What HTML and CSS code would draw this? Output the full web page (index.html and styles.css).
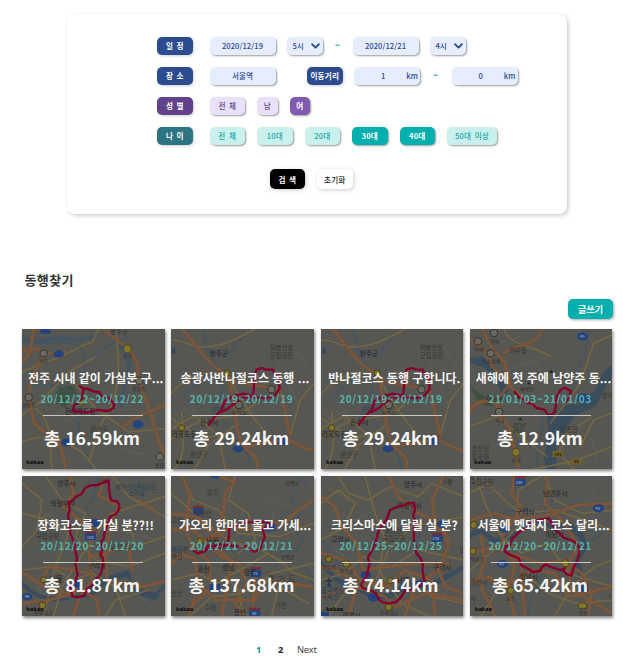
FILE: index.html
```html
<!DOCTYPE html>
<html lang="ko">
<head>
<meta charset="utf-8">
<title>동행찾기</title>
<link rel="stylesheet" href="styles.css">
</head>
<body>
<svg class="defs" width="0" height="0">
  <defs>
    <g id="wanju">
      <path class="water" d="M18 48 C50 70 90 62 118 80 C160 105 192 108 206 78 C220 50 245 38 258 20 M50 225 C80 200 110 170 165 150 M115 21 C120 60 125 85 165 150 C180 195 170 250 130 290 M165 280 C190 330 245 350 258 440"/>
      <path class="water wide" d="M18 75 L32 90"/>
      <path class="minor" d="M18 55 C55 50 80 80 120 75 C175 70 200 60 270 20 M18 215 C55 175 110 140 175 155 C215 190 225 245 300 330 M18 350 C55 325 80 300 150 290 C200 285 240 275 270 245 M30 440 C65 400 55 330 50 270 M20 290 L110 350 L200 330 M20 320 L90 280 L160 340 L180 440 M445 185 L405 235 L375 340 M90 440 L130 370 L210 310"/>
      <path class="local" d="M25 265 L80 330 M45 250 L115 310 M65 240 L125 305 M20 310 L90 265 M30 340 L110 285 M60 350 L130 320 M375 60 L430 140 M340 120 L400 250"/>
      <path class="major" d="M52 21 C100 75 120 120 180 155 C225 200 300 185 345 205 L375 340 C325 370 265 365 220 375 M180 155 C215 205 205 330 235 375 C270 400 280 410 275 440 M340 355 C380 345 400 380 445 385"/>
      <circle class="junction" cx="221" cy="249" r="11"/><circle class="junction" cx="319" cy="202" r="11"/>
      <circle class="town" cx="186" cy="153" r="9"/><circle class="town" cx="50" cy="317" r="9"/>
      <ellipse class="shield" cx="219" cy="380" rx="16" ry="11"/><rect class="shield" x="339" y="342" width="32" height="27" rx="6"/><rect class="shield-top" x="339" y="340" width="32" height="7"/>
      <text class="place" x="134" y="102">완주군</text><text class="area" x="314" y="85">위봉산성</text><text class="area" x="314" y="108">군립공원</text>
      <text class="place" x="105" y="308">전주시</text><text class="place" x="21" y="346">라북도청</text><text class="area" x="76" y="404">완산구</text><text class="small" x="201" y="278">동전주</text><text class="small blue" x="140" y="266">전주역</text><text class="small" x="18" y="92">읍</text>
      <path class="route" d="M132 308 L148 285 L168 266 L180 237 L205 222 L235 215 L264 221 L269 165 L274 143 L290 138 L302 143 L324 143 L326 153 L342 165 L343 202 L329 220 L302 229 L272 226 L248 225 L222 232 L205 246 L190 259 L168 271"/>
    </g>
  </defs>
</svg>
<main class="page">
  <form class="search">
    <div class="row">
      <span class="label navy">일 정</span>
      <span class="field input">2020/12/19</span>
      <span class="field select">5시 <svg class="arrow" viewBox="0 0 8 6"><path d="M1 1l3 3 3-3"/></svg></span>
      <span class="tilde">~</span>
      <span class="field input">2020/12/21</span>
      <span class="field select">4시 <svg class="arrow" viewBox="0 0 8 6"><path d="M1 1l3 3 3-3"/></svg></span>
    </div>
    <div class="row">
      <span class="label navy">장 소</span>
      <span class="field input place-input">서울역</span>
      <span class="label navy distance">이동거리</span>
      <span class="field input km"><span>1</span><span>km</span></span>
      <span class="tilde">~</span>
      <span class="field input km"><span>0</span><span>km</span></span>
    </div>
    <div class="row">
      <span class="label purple">성 별</span>
      <span class="field chip lilac">전 체</span>
      <span class="field chip lilac short">남</span>
      <span class="field chip lilac short on">여</span>
    </div>
    <div class="row">
      <span class="label teal">나 이</span>
      <span class="field chip mint">전 체</span>
      <span class="field chip mint">10대</span>
      <span class="field chip mint">20대</span>
      <span class="field chip mint on">30대</span>
      <span class="field chip mint on">40대</span>
      <span class="field chip mint long">50대 이상</span>
    </div>
    <div class="actions"><span class="button black">검 색</span><span class="button">초기화</span></div>
  </form>

  <h1 class="title">동행찾기</h1>
  <div class="toolbar"><span class="write">글쓰기</span></div>

  <section class="cards">
    <article class="card">
      <svg class="map" viewBox="20 21 427 420" preserveAspectRatio="none">
        <path class="green" d="M135 195 L170 192 L185 215 L160 235 L150 260 L125 250 L115 225Z"/>
        <path class="water wide" d="M20 52 C80 70 120 35 180 55 L240 45 M290 21 C300 70 325 75 340 120 C345 160 320 200 315 250"/>
        <path class="water" d="M20 55 C60 80 120 50 170 65 C215 70 215 140 195 165 M20 185 C60 190 100 180 150 200 C190 225 185 300 195 350 C205 390 230 420 225 440 M230 110 C265 70 300 65 345 40"/>
        <path class="minor" d="M20 150 L90 120 C150 105 190 70 230 60 L250 21 M20 280 L85 230 L160 150 L240 105 M110 440 C100 390 120 300 60 260 M20 360 C90 330 130 350 200 390 L240 440 M175 180 L240 260 L340 330 L447 320 M300 21 C310 100 325 210 260 300 L220 420"/>
        <path class="local" d="M100 220 L210 310 M110 280 L250 230 M130 310 L240 250 M320 380 L390 400 M340 270 L350 330 M85 170 L150 280"/>
        <path class="major" d="M265 21 C310 65 355 75 365 130 C370 200 390 230 405 270 L420 330 L447 400 M55 21 L45 90 L20 120 M85 95 L150 90 M20 90 C55 75 75 80 85 95 C75 130 45 150 40 220 L55 300 C90 350 140 330 150 440 M320 315 L365 285 L447 250"/>
        <circle class="junction" cx="85" cy="94" r="11"/><circle class="junction" cx="40" cy="226" r="11"/><circle class="junction" cx="372" cy="176" r="11"/><circle class="junction" cx="433" cy="404" r="11"/><circle class="town" cx="336" cy="80" r="12"/><circle class="town" cx="198" cy="241" r="9"/>
        <ellipse class="shield" cx="130" cy="96" rx="16" ry="11"/><rect class="shield" x="74" y="21" width="32" height="14" rx="6"/><ellipse class="shield" cx="368" cy="307" rx="16" ry="12"/><ellipse class="shield" cx="154" cy="361" rx="16" ry="12"/>
        <text class="small" x="71" y="123">전주</text><text class="small" x="323" y="109">전주</text><text class="small" x="350" y="206">동전주</text><text class="small" x="20" y="256">서전주</text><text class="small" x="418" y="435">상관</text><text class="place" x="148" y="275">전라북도청</text><text class="area" x="224" y="331">완산구</text><text class="area" x="285" y="36">완주군</text>
        <path class="route" d="M193 192 L207 201 L215 200 L234 208 L250 210 L258 221 L280 228 L296 245 L294 258 L278 267 L244 264 L220 271 L172 267 L176 250 L190 240 L202 225 L203 202"/>
        <text class="kakao" x="33" y="426">kakao</text>
      </svg>
      <h2>전주 시내 같이 가실분 구...</h2><p class="date">20/12/22~20/12/22</p><p class="total">총 16.59km</p>
    </article>
    <article class="card">
      <svg class="map" viewBox="18 21 427 420" preserveAspectRatio="none"><use href="#wanju"/><text class="kakao" x="33" y="426">kakao</text></svg>
      <h2>송광사반나절코스 동행 ...</h2><p class="date">20/12/19~20/12/19</p><p class="total">총 29.24km</p>
    </article>
    <article class="card">
      <svg class="map" viewBox="18 21 427 420" preserveAspectRatio="none"><use href="#wanju"/><text class="kakao" x="33" y="426">kakao</text></svg>
      <h2>반나절코스 동행 구합니다.</h2><p class="date">20/12/19~20/12/19</p><p class="total">총 29.24km</p>
    </article>
    <article class="card">
      <svg class="map" viewBox="19 118 427 420" preserveAspectRatio="none">
        <path class="green" d="M19 290 L70 325 L90 350 L50 345Z"/>
        <path class="river" d="M19 205 L55 200 L110 255 L135 300 L115 335 L105 290 L65 235 L19 220Z"/>
        <path class="river" d="M446 225 L420 245 L395 300 L345 342 L305 345 L265 370 L250 380 L255 445 L240 500 L245 538 L275 538 L280 490 L275 450 L305 420 L330 380 L395 350 L425 290 L446 265Z"/>
        <path class="water" d="M375 118 L365 190 L340 250 L320 330 M220 538 C215 480 235 430 240 390"/>
        <path class="minor" d="M120 118 C140 170 200 165 260 200 M446 135 L390 160 L350 280 L310 335 L260 400 M19 410 L100 380 L170 440 L250 500 M380 385 L310 430 L285 490 L330 538 M446 370 L390 390 L350 470 M446 470 L330 515 L210 538"/>
        <path class="local" d="M150 235 L210 210 L240 260 M200 390 L240 345 M340 420 L420 470 M380 440 L400 510 M110 160 L170 140"/>
        <path class="major" d="M55 118 L85 175 L120 215 L140 280 L105 325 L20 350 M19 150 L70 190 L85 230 L150 300 L210 350 M235 118 C220 170 170 160 120 190 M105 325 L100 370 L130 400 L150 470 L165 538 M19 370 C35 325 75 325 105 350"/>
        <circle class="junction" cx="91" cy="130" r="11"/><circle class="junction" cx="43" cy="155" r="11"/><circle class="junction" cx="81" cy="191" r="11"/><circle class="junction" cx="106" cy="367" r="11"/><circle class="town" cx="157" cy="488" r="12"/>
        <ellipse class="shield" cx="356" cy="140" rx="16" ry="12"/><ellipse class="shield" cx="360" cy="326" rx="22" ry="14"/><rect class="sign" x="266" y="484" width="32" height="18"/><rect class="sign" x="322" y="507" width="32" height="18"/>
        <path class="peak" d="M164 392l6-9 6 9zM190 284l6-9 6 9zM255 250l7-10 7 10z"/>
        <text class="small" x="78" y="161">우대</text><text class="small" x="32" y="184">미페</text><text class="area" x="136" y="190">와부읍</text><text class="small" x="54" y="221">덕소삼패</text><text class="small" x="95" y="396">하남</text><text class="place" x="68" y="333">하남시</text><text class="small" x="169" y="304">예봉산</text><text class="small" x="146" y="411">검단산</text><text class="small" x="146" y="430">(657)</text><text class="area" x="289" y="427">남종면</text><text class="area" x="412" y="326">양서</text><text class="area" x="24" y="485">한산성</text><text class="area" x="24" y="508">립공원</text><text class="small" x="144" y="516">산곡</text><text class="num" x="272" y="498">342</text><text class="num" x="330" y="521">88</text><text class="num white" x="348" y="145">45</text>
        <path class="route" d="M153 307 L166 324 L178 328 L190 340 L205 342 L218 355 L242 360 L252 374 L264 376 L272 367 L277 345 L279 320 L290 302 L301 294 L322 304 L316 325 L305 337"/>
        <text class="kakao" x="31" y="523">kakao</text>
      </svg>
      <h2>새해에 첫 주에 남양주 동...</h2><p class="date">21/01/03~21/01/03</p><p class="total">총 12.9km</p>
    </article>
    <article class="card">
      <svg class="map" viewBox="20 18 427 420" preserveAspectRatio="none">
        <path class="river" d="M20 335 C65 370 85 390 150 375 C220 375 235 335 270 320 L340 300 L355 350 L420 370 L447 340 L447 355 L420 390 L365 375 L335 320 L275 340 L230 380 L155 390 C90 405 55 375 20 350Z"/>
        <path class="water" d="M360 18 L390 60 L370 115 M390 410 L430 380 L447 320 M245 18 L235 80 L210 120"/>
        <path class="minor" d="M20 40 L80 90 L65 180 L20 230 M90 18 L140 90 L210 130 L180 200 L240 270 L340 290 L447 250 M20 300 L110 290 L170 330 L230 310 L300 350 L330 438 M115 438 L140 350 L210 240 L290 130 L447 80 M290 18 L340 80 L447 140 M20 130 L100 150 L160 190 L120 290 L85 438 M340 160 L360 230 L447 200 M270 438 L300 390 L400 360"/>
        <path class="local" d="M60 180 L100 130 L150 210 L120 260 M300 220 L370 290 M310 180 L425 210 M350 340 L390 400 M50 320 L80 370 L200 390"/>
        <path class="major" d="M165 18 L175 70 L145 110 L200 155 L230 165 L220 250 L230 330 L190 385 L175 438 M270 18 L250 75 L310 110 L285 160 L270 250 L275 330 L380 350 L447 335 M20 310 C80 330 100 390 200 360 L245 390 L250 438 M80 330 L100 290 L180 300 L220 310 M230 260 L340 230 L350 300 M20 400 L100 390 L180 370 M370 90 L415 120"/>
        <circle class="town" cx="85" cy="329" r="9"/><circle class="town" cx="81" cy="406" r="10"/><rect class="shield" x="222" y="148" width="29" height="22" rx="8"/><rect class="shield" x="209" y="188" width="33" height="23" rx="5"/><rect class="shield-top" x="209" y="184" width="33" height="6"/><ellipse class="shield" cx="36" cy="380" rx="15" ry="11"/><ellipse class="shield" cx="181" cy="342" rx="16" ry="12"/>
        <text class="place" x="126" y="48">양주시</text><text class="place" x="105" y="109">의정부시</text><text class="area blue resort" x="299" y="56">베어스타운리조트</text><text class="area blue resort" x="340" y="76">스키장</text><text class="area" x="62" y="207">국립공원</text><text class="place" x="216" y="294">구리시</text><text class="place large" x="99" y="336">서울</text><text class="small" x="55" y="434">동작대교</text><text class="area" x="285" y="240">남양주시</text><text class="small" x="246" y="35">소흘</text><text class="num white" x="214" y="206">100</text><text class="num white" x="28" y="385">46</text>
        <path class="route" d="M160 97 L172 91 L182 80 L198 72 L210 53 L226 46 L246 45 L263 38 L279 31 L282 67 L287 91 L304 94 L311 103 L311 118 L301 132 L283 141 L275 166 L267 189 L264 207 L257 215 L262 233 L255 255 L263 266 L262 290 L255 313 L239 331 L230 347 L216 355 L206 377 L184 382 L171 378 L165 353 L181 331 L187 313 L180 284 L185 268 L176 220 L165 190 L162 165 L158 133 L163 123Z"/>
        <text class="kakao" x="33" y="424">kakao</text>
      </svg>
      <h2>장화코스를 가실 분??!!</h2><p class="date">20/12/20~20/12/20</p><p class="total">총 81.87km</p>
    </article>
    <article class="card">
      <svg class="map" viewBox="18 18 427 420" preserveAspectRatio="none">
        <path class="water" d="M395 60 L380 100 L405 130 L380 175 L415 210 L390 245 L355 240 L325 270 M18 240 L80 240 L110 220 L220 245 L260 240 M405 270 L430 310 L445 350 M400 18 L425 50"/>
        <path class="minor" d="M18 70 L75 120 L120 160 L190 210 L290 240 L340 270 L390 310 L445 330 M50 18 L85 90 L160 120 L220 190 L340 200 L445 160 M18 330 L100 310 L155 340 L225 300 L310 250 M75 438 L140 380 L230 370 L320 310 L445 280 M210 18 L190 90 L250 130 L270 210 L220 250 M320 438 L340 350 L430 400 M235 438 L220 360 L180 320"/>
        <path class="local" d="M60 60 L110 130 M275 60 L330 120 L310 180 M300 80 L400 120 M180 260 L250 330 M280 360 L360 430"/>
        <path class="major" d="M155 18 L210 35 L180 70 L175 130 L150 190 L165 240 L200 280 L185 350 L170 438 M18 130 L95 140 L145 200 L80 230 L18 280 M18 180 L80 175 L135 230 L170 260 L220 280 L245 340 L210 400 L240 438 M445 90 L400 120 L360 155 L310 165 L250 180 L200 170 L145 210 M18 250 L90 265 L100 340 L150 390 L270 390 L290 330 L445 350 M90 380 L70 438 M50 18 L75 70 L60 180 L90 240 L130 270 L140 350 L80 410 M270 325 L260 438"/>
        <rect class="shield" x="84" y="112" width="31" height="22" rx="6"/><rect class="shield-top" x="84" y="107" width="31" height="7"/><rect class="shield" x="256" y="297" width="32" height="24" rx="6"/><rect class="shield-top" x="256" y="291" width="32" height="7"/><rect class="shield" x="252" y="419" width="34" height="19" rx="5"/><rect class="shield-top" x="252" y="413" width="34" height="7"/><ellipse class="shield" cx="150" cy="18" rx="14" ry="8"/><rect class="shield" x="299" y="158" width="31" height="26" rx="7"/><rect class="shield" x="133" y="342" width="33" height="24" rx="6"/><circle class="town" cx="105" cy="214" r="9"/>
        <text class="area" x="126" y="75">양주</text><text class="small" x="360" y="46">가평군</text><text class="area" x="88" y="138">북한산</text><text class="place large" x="119" y="222">서울</text><text class="area" x="18" y="158">고양</text><text class="area blue" x="18" y="246">세공항</text><text class="area" x="18" y="267">역선</text><text class="place" x="97" y="305">과천</text><text class="place" x="171" y="299">성남</text><text class="place" x="237" y="314">광주</text><text class="area large spaced" x="307" y="336">경기도</text><text class="small" x="347" y="267">양평군</text><text class="area" x="119" y="421">수원</text><text class="area" x="330" y="414">이천</text><text class="place" x="206" y="434">용인</text><text class="area" x="18" y="378">안산</text><text class="num white" x="263" y="314">35</text><text class="num white" x="260" y="434">50</text>
        <path class="route" d="M86 242 L98 250 L115 245 L129 236 L161 237 L188 222 L192 197 L192 173 L211 167 L238 158 L304 155 L315 162 L293 180 L299 201 L289 222 L287 235 L266 245 L241 229 L209 228 L184 225 L164 223 L147 229 L130 226 L115 245"/>
        <text class="kakao" x="33" y="424">kakao</text>
      </svg>
      <h2>가오리 한마리 몰고 가세...</h2><p class="date">20/12/21~20/12/21</p><p class="total">총 137.68km</p>
    </article>
    <article class="card">
      <svg class="map" viewBox="18 18 427 420" preserveAspectRatio="none">
        <path class="river" d="M18 270 L65 320 L120 345 L170 375 L220 370 L275 335 L330 345 L445 285 L445 300 L340 360 L285 350 L230 385 L180 390 L120 360 L60 335 L18 285Z"/>
        <path class="water" d="M18 200 L45 240 L75 290 M310 310 L300 220 L330 160"/>
        <path class="minor" d="M18 100 L70 60 L120 100 L90 170 L18 210 M70 18 L100 70 L160 90 L225 50 L310 80 L350 40 L445 80 M18 330 L90 310 L145 260 L230 290 L310 240 L445 270 M40 438 L90 370 L180 340 L220 240 L290 170 L445 140 M150 18 L180 130 L210 210 L190 300 L260 400 L340 438 M445 400 L350 380 L280 310"/>
        <path class="local" d="M30 50 L100 90 M50 120 L120 150 L180 120 M200 180 L240 230 L210 270 M350 170 L420 210 M350 400 L410 350 M60 240 L120 280"/>
        <path class="major" d="M18 80 L60 110 L75 160 L125 220 L145 300 L220 290 L310 280 L400 280 M220 18 L250 80 L310 130 L380 160 L400 230 L370 300 L390 350 L445 370 M18 250 L90 270 L145 340 L220 350 L270 300 L350 330 L360 438 M385 18 L350 90 L360 160 L400 210 M18 380 L120 350 L210 380 L240 410 L330 370 L445 390 M100 438 L120 370 L90 310 L18 290 M270 438 L300 350 L380 290"/>
        <rect class="shield" x="350" y="193" width="32" height="24" rx="5"/><rect class="shield-top" x="350" y="188" width="32" height="7"/><ellipse class="shield" cx="381" cy="162" rx="16" ry="12"/><ellipse class="shield" cx="174" cy="382" rx="16" ry="12"/><ellipse class="shield" cx="152" cy="315" rx="16" ry="11"/><ellipse class="shield" cx="316" cy="342" rx="17" ry="12"/><rect class="shield" x="18" y="426" width="24" height="12"/><circle class="town" cx="41" cy="267" r="9"/><circle class="town" cx="94" cy="281" r="10"/><circle class="town" cx="225" cy="332" r="9"/><circle class="town" cx="221" cy="411" r="10"/><path class="plane" d="M42 323v24M33 334l9-5 9 5M37 347l5-4 5 4"/>
        <text class="place" x="266" y="52">양주시</text><text class="small" x="383" y="38">소흘</text><text class="place" x="246" y="114">의정부시</text><text class="area" x="208" y="190">북한산</text><text class="area" x="202" y="212">국립공원</text><text class="place" x="49" y="215">고양시</text><text class="place" x="353" y="300">구리시</text><text class="place large" x="241" y="341">서울</text><text class="small" x="22" y="298">자유로</text><text class="small" x="73" y="308">북로산</text><text class="area blue" x="18" y="368">포국제공항</text><text class="area blue" x="18" y="388">국제선</text><text class="small" x="194" y="434">동작대교</text><text class="place" x="81" y="445">광명시</text><text class="num white" x="351" y="209">100</text><text class="area" x="433" y="245">남양</text>
        <path class="route" d="M225 120 L250 109 L268 106 L282 99 L297 99 L300 118 L294 137 L302 158 L297 175 L296 210 L300 227 L303 248 L316 264 L323 282 L322 302 L328 333 L321 345 L303 350 L293 356 L270 362 L256 384 L241 397 L221 400 L204 397 L192 390 L182 369 L164 361 L143 354 L138 344 L149 329 L157 312 L163 282 L159 263 L176 231 L183 214 L190 184 L200 167 L214 150Z"/>
        <text class="kakao" x="33" y="424">kakao</text>
      </svg>
      <h2>크리스마스에 달릴 실 분?</h2><p class="date">20/12/25~20/12/25</p><p class="total">총 74.14km</p>
    </article>
    <article class="card">
      <svg class="map" viewBox="466 18 427 420" preserveAspectRatio="none">
        <path class="river" d="M466 185 L500 175 L540 205 L590 190 L620 150 L680 145 L720 170 L760 150 L805 190 L820 235 L795 270 L805 320 L790 330 L780 270 L805 235 L790 200 L755 170 L720 185 L680 160 L630 165 L595 205 L535 220 L500 190 L466 205Z"/>
        <path class="water" d="M893 165 L850 200 L815 220 M530 140 L600 120 L680 135 L730 70 M690 300 L650 380 L640 438"/>
        <path class="minor" d="M466 70 L520 40 L580 100 L620 130 L720 120 L893 180 M480 18 L520 120 L560 200 L620 250 L700 220 L760 310 L893 350 M466 300 L550 230 L610 170 L610 60 L680 18 M500 438 L560 340 L640 320 L700 370 L780 400 L893 390 M690 18 L720 90 L800 130 L893 120 M720 438 L770 350 L840 290 L893 270"/>
        <path class="local" d="M500 70 L570 60 M640 60 L670 100 L650 160 M840 60 L810 110 M600 350 L640 400 M690 330 L750 350 M820 360 L870 400"/>
        <path class="major" d="M600 18 L590 70 L620 110 L590 160 L560 200 L600 290 L580 360 L600 438 M466 250 L540 230 L580 250 L680 280 L750 270 L800 310 L830 370 L820 438 M466 150 L540 130 L600 150 L720 130 L790 105 L893 100 M466 340 L520 320 L560 350 L610 330 L650 300 L720 310 L760 380 L893 350 M500 200 L510 270 L490 330 L540 438 M700 18 L690 100 L750 160 L790 230 L760 280 L770 360 L893 430 M630 438 L620 280 L570 240"/>
        <rect class="shield" x="600" y="26" width="33" height="22" rx="5"/><rect class="shield-top" x="600" y="18" width="33" height="7"/><ellipse class="shield" cx="851" cy="115" rx="17" ry="12"/><ellipse class="shield" cx="563" cy="282" rx="17" ry="12"/><ellipse class="shield" cx="571" cy="176" rx="16" ry="11"/><rect class="shield" x="789" y="344" width="32" height="22" rx="5"/><rect class="shield-top" x="789" y="339" width="32" height="6"/><circle class="town" cx="477" cy="165" r="10"/><circle class="town" cx="475" cy="243" r="9"/><circle class="town" cx="751" cy="280" r="11"/><circle class="town" cx="588" cy="362" r="10"/><ellipse class="town" cx="803" cy="407" rx="13" ry="9"/>
        <text class="area" x="466" y="24">한산</text><text class="area" x="466" y="45">국립공원</text><text class="place" x="685" y="77">남양주시</text><text class="place" x="604" y="131">구리시</text><text class="place" x="692" y="202">하남시</text><text class="place" x="614" y="327">성남시</text><text class="area" x="466" y="346">과천시</text><text class="small" x="466" y="272">작대교</text><text class="small" x="575" y="391">금토</text><text class="area" x="466" y="392">시</text><text class="small" x="791" y="435">영동</text><text class="area" x="873" y="390">ㄱ</text><text class="num white" x="602" y="42">100</text><text class="num white" x="842" y="120">45</text><text class="num white" x="554" y="287">47</text>
        <path class="route" d="M570 244 L573 230 L587 224 L591 208 L612 187 L638 173 L653 155 L675 150 L702 145 L713 162 L720 177 L736 191 L748 204 L766 209 L784 219 L793 234 L793 253 L786 275 L777 291 L770 317 L756 313 L746 303 L750 294 L737 300 L711 292 L693 283 L682 291 L676 303 L654 306 L638 295 L620 286 L612 265 L585 254Z"/>
        <text class="kakao" x="480" y="424">kakao</text>
      </svg>
      <h2>서울에 멧돼지 코스 달리...</h2><p class="date">20/12/20~20/12/21</p><p class="total">총 65.42km</p>
    </article>
  </section>

  <nav class="pages"><span class="current">1</span><span class="two">2</span><span class="next">Next</span></nav>
</main>
</body>
</html>
```
FILE: styles.css
```css
* { box-sizing: border-box; }
body {
  margin: 0;
  background: #fff;
  font-family: "Noto Sans CJK KR", sans-serif;
  font-size: 7.6px;
  line-height: 1;
}
.defs { display: block; }
.page { height: 663px; overflow: hidden; padding: 14px 0 0 22px; }

.search {
  width: 500px;
  height: 200px;
  margin-left: 45px;
  padding: 23px 0 0 90px;
  border-radius: 8px;
  box-shadow: 2px 2px 4px rgba(0, 0, 0, .17), 0 0 2px rgba(0, 0, 0, .08);
}
.row { display: flex; align-items: center; height: 18px; margin-bottom: 12px; white-space: nowrap; }
.label, .field, .button, .write {
  display: flex;
  align-items: center;
  justify-content: center;
  border-radius: 5px;
  white-space: nowrap;
}
.label { width: 35.5px; height: 18px; margin-right: 17px; color: #fff; font-weight: 700; word-spacing: 1.6px; box-shadow: 1px 1px 3px rgba(0, 0, 0, .2); }
.navy { background: #2b4c8f; }
.purple { background: #60428a; }
.teal { background: #2c7484; }
.field { height: 18px; background: #e6edff; color: #2b4c8f; font-weight: 500; box-shadow: 1px 1px 2px rgba(0, 0, 0, .4); }
.input { width: 66px; margin-right: 11px; letter-spacing: .05px; }
.select { width: 36px; justify-content: space-between; padding: 0 3px 0 6px; }
.arrow { width: 9px; height: 7px; fill: none; stroke: #2b4c8f; stroke-width: 1.6; }
.tilde { width: 30px; text-align: center; color: #27a9a5; font-size: 9.5px; font-weight: 500; }
.place-input { margin-right: 31.5px; }
.distance { margin-right: 11.5px; letter-spacing: .2px; }
.km { justify-content: space-between; margin-right: 0; padding: 0 2px 0 27px; }
.km + .tilde { width: 31.5px; }
.chip { width: 35.5px; margin-right: 12px; word-spacing: 1.3px; }
.lilac { background: #e9e1fa; color: #60428a; }
.short { width: 20.5px; }
.lilac.on { background: #8059b2; color: #fff; font-weight: 700; }
.mint { background: #caf0ee; color: #20a9a5; letter-spacing: .15px; }
.mint.on { background: #00afae; color: #fff; font-weight: 700; }
.long { width: 50px; }
.actions { display: flex; gap: 12px; margin: 24px 0 0 112.5px; }
.button { width: 35.5px; height: 20px; font-weight: 500; padding-top: 1px; color: #222; letter-spacing: .2px; box-shadow: 1px 1px 4px rgba(0, 0, 0, .2); }
.black { background: #000; color: #fff; font-weight: 700; word-spacing: 1px; }

.title { margin: 58px 0 0 2.5px; height: 16px; line-height: 16px; font-size: 13px; font-weight: 600; letter-spacing: .4px; color: #333; }
.toolbar { display: flex; justify-content: flex-end; width: 591px; margin-top: 11px; }
.write { width: 45px; height: 20px; background: #00afae; color: #fff; font-size: 9px; font-weight: 700; box-shadow: 1px 1px 3px rgba(0, 0, 0, .35); }

.cards { display: grid; grid-template-columns: repeat(4, 142.5px); gap: 7.3px 6.8px; margin-top: 10px; }
.card {
  position: relative;
  height: 140px;
  padding-top: 40px;
  background: #565652;
  color: #f4f4f2;
  text-align: center;
  white-space: nowrap;
  box-shadow: 1px 2px 3px rgba(0, 0, 0, .5);
}
.map { position: absolute; inset: 0; width: 100%; height: 100%; overflow: hidden; }
.card h2, .card p { position: relative; margin: 0; }
.card h2 { margin-left: 5px; height: 18px; line-height: 18px; font-size: 12px; font-weight: 700; }
.date { height: 24px; line-height: 24px; font-size: 10px; font-weight: 700; letter-spacing: .65px; color: #55b5ac; }
.card .date { margin-right: 2px; }
.total { width: 100px; height: 44px; line-height: 44px; border-top: 1px solid #c9c9c4; font-size: 17.6px; font-weight: 700; display: flex; justify-content: center; }
.card .total { margin: 4px 0 0 21px; padding-right: 2px; }

path { fill: none; stroke-linecap: round; stroke-linejoin: round; }
.map .green { fill: #3e5040; }
.map .river { fill: #3b4c5c; }
.water { stroke: #435565; stroke-width: 4; }
.water.wide { stroke-width: 10; }
.local { stroke: #676760; stroke-width: 2; }
.minor { stroke: #736642; stroke-width: 5; }
.major { stroke: #7e5536; stroke-width: 8; }
.route { stroke: #85002f; stroke-width: 7; }
.junction { fill: #6b685f; stroke: #333; stroke-width: 3; }
.town { fill: #837528; stroke: #4a4525; stroke-width: 3; }
.shield { fill: #24427b; }
.shield-top { fill: #782c31; }
.sign { fill: #716022; }
.map .peak { fill: #252925; }
.map .plane { stroke: #20384d; stroke-width: 4; }
.place, .area, .small { fill: #292a2a; font-size: 20px; }
.place { font-weight: 500; }
.area { font-size: 19px; fill: #353636; }
.small { font-size: 15px; }
.large { font-size: 23px; }
.spaced { letter-spacing: 10px; }
.blue { fill: #293e53; }
.resort { font-size: 17px; }
.num { fill: #222; font-size: 12px; font-weight: 700; }
.white { fill: #8995ad; }
.kakao { fill: #080808; font: 700 17px "Open Sans", sans-serif; }

.pages { display: flex; align-items: center; height: 14px; margin: 26px 0 0 234px; font-family: "Noto Sans", sans-serif; font-size: 9.3px; font-weight: 700; }
.pages span { width: 22px; }
.current { color: #12959a; }
.pages .two { width: 19px; color: #222; }
.pages .next { font-weight: 400; color: #444; letter-spacing: -.2px; }
```
